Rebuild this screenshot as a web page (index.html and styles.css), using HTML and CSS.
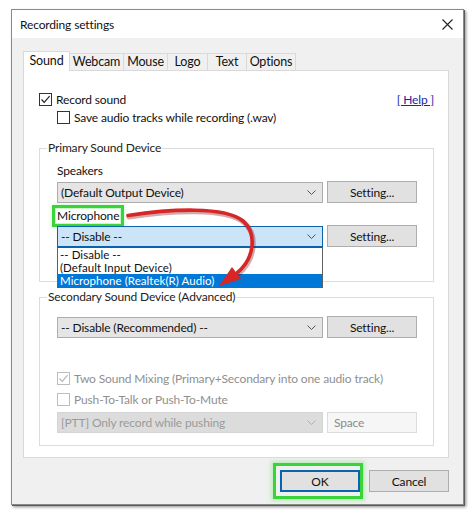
FILE: index.html
```html
<!DOCTYPE html>
<html>
<head>
<meta charset="utf-8">
<title>Recording settings</title>
<link rel="stylesheet" href="styles.css">
</head>
<body>
<div class="window">
  <div class="titlebar">
    <span class="title">Recording settings</span>
    <svg class="close" width="11" height="11" viewBox="0 0 11 11"><path d="M0.5 0.5 L10.5 10.5 M10.5 0.5 L0.5 10.5" stroke="#222" stroke-width="1.1" fill="none"/></svg>
  </div>
  <div class="client">
    <div class="tabs">
      <div class="tab active t-sound">Sound</div>
      <div class="tab t-webcam">Webcam</div>
      <div class="tab t-mouse">Mouse</div>
      <div class="tab t-logo">Logo</div>
      <div class="tab t-text">Text</div>
      <div class="tab t-options">Options</div>
    </div>
    <div class="panel">
      <div class="row">
        <span class="box"><svg width="11" height="11" viewBox="0 0 11 11"><path d="M1.5 5.5 L4.2 8.3 L9.6 2.2" stroke="#222" stroke-width="1.2" fill="none"/></svg></span>
        <span class="cap">Record sound</span>
        <a class="help">[ Help ]</a>
      </div>
      <div class="row sub">
        <span class="box"></span>
        <span class="cap">Save audio tracks while recording (.wav)</span>
      </div>

      <fieldset class="group g1">
        <legend>Primary Sound Device</legend>
        <div class="label">Speakers</div>
        <div class="devrow">
          <div class="select"><span>(Default Output Device)</span><svg class="chev" width="9" height="5" viewBox="0 0 9 5"><path d="M0.5 0.5 L4.5 4.5 L8.5 0.5" stroke="#555" stroke-width="1" fill="none"/></svg></div>
          <div class="btn">Setting...</div>
        </div>
        <div class="label mic"><span class="hl">Microphone</span></div>
        <div class="devrow">
          <div class="select focus"><span>-- Disable --</span><svg class="chev" width="9" height="5" viewBox="0 0 9 5"><path d="M0.5 0.5 L4.5 4.5 L8.5 0.5" stroke="#555" stroke-width="1" fill="none"/></svg>
            <div class="droplist">
              <div class="item">-- Disable --</div>
              <div class="item">(Default Input Device)</div>
              <div class="item sel">Microphone (Realtek(R) Audio)</div>
            </div>
          </div>
          <div class="btn">Setting...</div>
        </div>
      </fieldset>

      <fieldset class="group g2">
        <legend>Secondary Sound Device (Advanced)</legend>
        <div class="devrow">
          <div class="select"><span>-- Disable (Recommended) --</span><svg class="chev" width="9" height="5" viewBox="0 0 9 5"><path d="M0.5 0.5 L4.5 4.5 L8.5 0.5" stroke="#555" stroke-width="1" fill="none"/></svg></div>
          <div class="btn">Setting...</div>
        </div>
        <div class="row dis mix">
          <span class="box"><svg width="11" height="11" viewBox="0 0 11 11"><path d="M1.5 5.5 L4.2 8.3 L9.6 2.2" stroke="#b5b5b5" stroke-width="1.2" fill="none"/></svg></span>
          <span class="cap">Two Sound Mixing (Primary+Secondary into one audio track)</span>
        </div>
        <div class="row dis ptt">
          <span class="box"></span>
          <span class="cap">Push-To-Talk or Push-To-Mute</span>
        </div>
        <div class="devrow pttrow">
          <div class="select disabled"><span>[PTT] Only record while pushing</span><svg class="chev" width="9" height="5" viewBox="0 0 9 5"><path d="M0.5 0.5 L4.5 4.5 L8.5 0.5" stroke="#b0b0b0" stroke-width="1" fill="none"/></svg></div>
          <div class="field">Space</div>
        </div>
      </fieldset>
    </div>
    <div class="buttons">
      <div class="okwrap"><div class="btn ok">OK</div></div>
      <div class="btn">Cancel</div>
    </div>
  </div>
</div>
<svg class="arrow" width="474" height="515" viewBox="0 0 474 515">
  <path d="M128,215.5 C170,209 225,206 243,221 C257,233 255,258 237,273" stroke="#7a0e0e" stroke-opacity="0.35" stroke-width="5" fill="none" stroke-linecap="round" transform="translate(1,1.5)"/>
  <path d="M128,215.5 C170,209 225,206 243,221 C257,233 255,258 237,273" stroke="#d82626" stroke-width="3.6" fill="none" stroke-linecap="round"/>
  <polygon points="219,286 232,267 241,279" fill="#d82626"/>
</svg>
</body>
</html>
```
FILE: styles.css
```css
* { box-sizing: border-box; }
body {
  margin: 0;
  background: #ffffff;
  font-family: Lato, "Noto Sans", sans-serif;
  font-size: 12px;
  letter-spacing: -0.15px;
  color: #111;
  position: relative;
  width: 474px;
  height: 515px;
  overflow: hidden;
}
.window {
  margin: 9px 0 0 11px;
  width: 453px;
  height: 496px;
  border: 1px solid #8a8a8a;
  box-shadow: 1px 1px 0 #5a5a5a, 2px 2px 3px rgba(0,0,0,0.45);
  background: #f0f0f0;
  display: flex;
  flex-direction: column;
}
.titlebar {
  height: 28px;
  background: #ffffff;
  display: flex;
  align-items: center;
  padding: 0 10px 0 8px;
}
.title { font-size: 12px; color: #111; flex: 1; }
.close { margin-top: 1px; }
.client {
  flex: 1;
  padding: 13px 14px 0 11px;
}
.tabs {
  display: flex;
  align-items: flex-end;
  height: 19px;
  position: relative;
  z-index: 2;
}
.tab {
  height: 17px;
  line-height: 16px;
  border: 1px solid #d9d9d9;
  border-bottom: none;
  border-left: none;
  background: #f0f0f0;
  font-size: 12.5px;
  text-align: center;
  white-space: nowrap;
}
.t-webcam { width: 54px; }
.t-mouse { width: 44px; }
.t-logo { width: 40px; }
.t-text { width: 39px; }
.t-options { width: 49px; }
.tab.active {
  width: 47px;
  height: 20px;
  margin-bottom: -1px;
  background: #ffffff;
  border-left: 1px solid #d9d9d9;
  line-height: 18px;
}
.panel {
  height: 388px;
  border: 1px solid #d9d9d9;
  background: #ffffff;
  padding: 20px 0 0 15px;
  position: relative;
}
.row {
  display: flex;
  align-items: center;
  height: 16px;
}
.row.sub { margin-top: 2px; padding-left: 18px; }
.box {
  width: 13px;
  height: 13px;
  border: 1px solid #333;
  background: #fff;
  display: inline-flex;
  align-items: center;
  justify-content: center;
  margin-right: 4px;
  flex: none;
}
.cap { white-space: nowrap; }
.help {
  margin-left: auto;
  margin-right: 14px;
  color: #2323a8;
  text-decoration: underline;
}
.group {
  width: 395px;
  margin: 15px 0 0 0;
  padding: 7px 0 34px 17px;
  border: 1px solid #dcdcdc;
  min-width: 0;
}
.group legend {
  margin-left: -10px;
  padding: 0 1px;
  line-height: 16px;
  color: #222;
}
.g2 { margin-top: 7px; padding-top: 9px; padding-bottom: 12px; }
.label { height: 16px; line-height: 16px; }
.label.mic { margin-top: 5px; }
.hl {
  display: inline-block;
  line-height: 14px;
  padding: 0 1px;
  margin-left: -1px;
  outline: 3px solid #3ad43a;
  outline-offset: 1px;
  box-shadow: 0 0 5px 4px rgba(90,230,90,0.35);
}
.devrow {
  display: flex;
  align-items: center;
  gap: 4px;
  height: 22px;
  margin-top: 2px;
}
.label.mic + .devrow { margin-top: 1px; }
.select {
  position: relative;
  width: 266px;
  height: 21px;
  border: 1px solid #adadad;
  background: #e5e5e5;
  display: flex;
  align-items: center;
  justify-content: space-between;
  padding: 0 6px 0 3px;
}
.select.focus { background: #cce4f7; border-color: #0a64ad; }
.select.disabled { background: #dcdcdc; border-color: #d4d4d4; color: #9a9a9a; }
.btn {
  width: 90px;
  height: 22px;
  border: 1px solid #adadad;
  background: #e1e1e1;
  display: flex;
  align-items: center;
  justify-content: center;
}
.droplist {
  position: absolute;
  left: -1px;
  top: 20px;
  width: 266px;
  height: 41px;
  background: #ffffff;
  border: 1px solid #5f5f5f;
  border-top: 1px solid #0a64ad;
  z-index: 3;
}
.item {
  height: 13px;
  line-height: 13px;
  font-size: 11.5px;
  padding-left: 2px;
  white-space: nowrap;
  letter-spacing: 0.05px;
}
.item.sel { background: #0078d7; color: #ffffff; height: 14px; line-height: 14px; }
.dis { color: #8f8f8f; }
.dis .box { border-color: #bdbdbd; }
.mix { margin-top: 32px; }
.ptt { margin-top: 5px; }
.pttrow { margin-top: 5px; height: 21px; }
.field {
  width: 90px;
  height: 21px;
  border: 1px solid #dcdcdc;
  background: #f6f6f6;
  color: #8a8a8a;
  display: flex;
  align-items: center;
  padding-left: 6px;
}
.buttons {
  margin-top: 5px;
  display: flex;
  justify-content: flex-end;
  align-items: center;
  gap: 6px;
}
.okwrap {
  border: 3px solid #3ad43a;
  padding: 4px 0 4px 4px;
  box-shadow: 0 0 4px 2px rgba(90,230,90,0.35);
}
.btn.ok { width: 80px; border: 2px solid #0a64ad; }
.buttons > .btn { width: 80px; }
.arrow {
  position: absolute;
  left: 0;
  top: 0;
  pointer-events: none;
  z-index: 5;
}
```
